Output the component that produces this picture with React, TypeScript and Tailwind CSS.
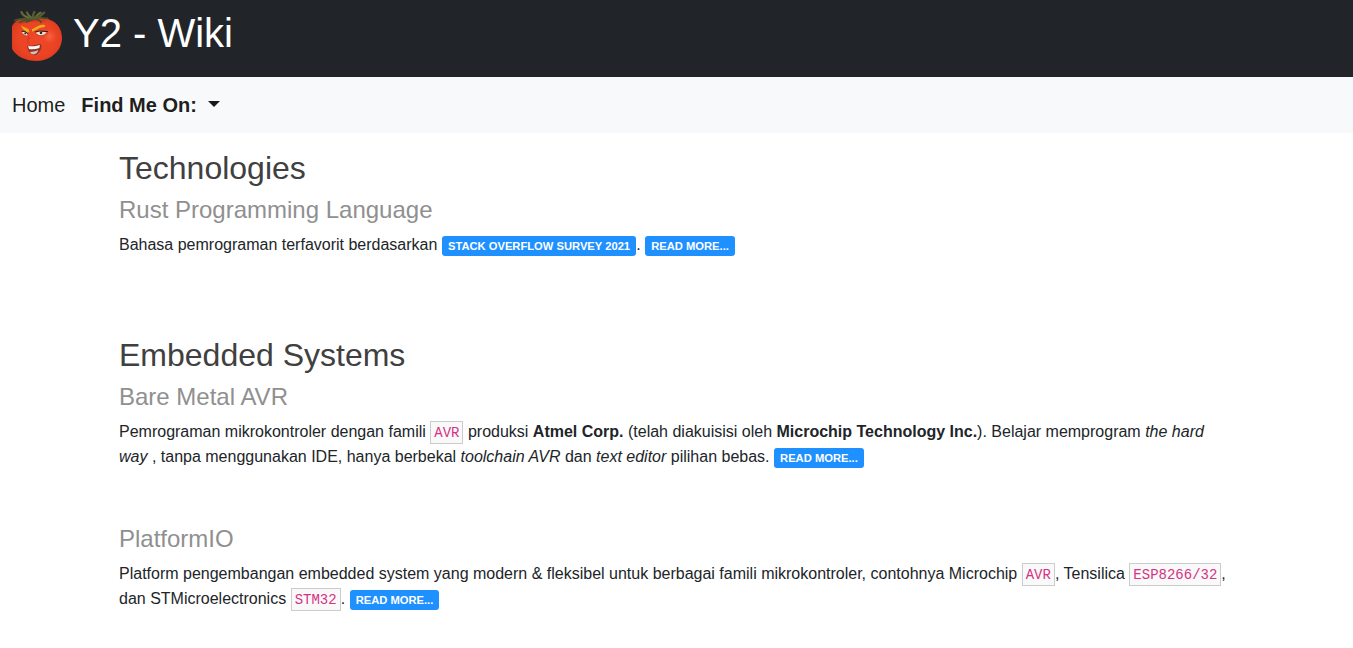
import type { ReactNode } from "react";

function TomatoLogo() {
  return (
    <svg viewBox="0 0 150 150" className="size-[50px] shrink-0" aria-hidden="true">
      <defs>
        <radialGradient id="skin" cx="0.5" cy="0.5" r="0.6">
          <stop offset="0" stopColor="#ee482a" />
          <stop offset="0.65" stopColor="#eb4324" />
          <stop offset="0.9" stopColor="#dc3c20" />
          <stop offset="1" stopColor="#ba3420" />
        </radialGradient>
        <radialGradient id="shine">
          <stop offset="0" stopColor="#ffa381" stopOpacity="0.75" />
          <stop offset="1" stopColor="#ff7648" stopOpacity="0" />
        </radialGradient>
      </defs>
      <path d="M0 45C10 25 29 19 50 21C70 16 96 18 113 26C137 34 150 56 150 81C150 119 116 149 75 150C40 150 12 135 0 113Z" fill="url(#skin)" />
      <ellipse cx="113" cy="76" rx="22" ry="23" fill="url(#shine)" opacity="0.5" />
      <path d="M24 36C48 29 75 28 99 30" fill="none" stroke="#a93017" strokeWidth="5" opacity="0.5" />
      <g fill="none" strokeLinecap="round">
        <path d="M9 28C28 20 42 22 59 25C45 28 34 27 22 34M62 24C54 31 48 30 44 33M65 24C79 24 84 28 87 34M72 22C87 18 96 23 107 22" stroke="#46502c" strokeWidth="5" />
        <path d="M28 2C31 14 41 17 55 23M45 4C48 13 55 19 65 23M65 23C61 13 64 8 67 3M72 23C73 14 78 9 86 5M79 21C85 13 91 12 96 5" stroke="#565b32" strokeWidth="7" />
        <path d="M29 4C32 12 39 16 49 20M46 7L57 19M69 17C74 12 79 10 85 6" stroke="#8a854b" strokeWidth="2" />
      </g>
      <path d="M27 43C34 49 41 50 50 55L52 63L46 65C37 59 31 54 27 43ZM60 54C71 51 76 42 92 41C101 41 103 45 94 49C80 49 75 58 60 62Z" fill="#eaae18" />
      <path d="M30 63L39 61L47 69L43 74C35 73 32 69 30 63ZM71 65L83 61L103 64C101 72 91 75 80 73Z" fill="#f3dfd2" />
      <path d="M29 61L39 61L49 69M69 63L83 60L108 62" fill="none" stroke="#30201c" strokeWidth="3" />
      <path d="M75 71C83 76 94 75 101 68M32 69L43 76" fill="none" stroke="#6c2419" strokeWidth="1.5" />
      <circle cx="40" cy="67" r="3.2" fill="#302520" />
      <ellipse cx="87" cy="66" rx="4" ry="3.5" fill="#302520" />
      <path d="M48 76C53 80 45 84 49 90M45 93L52 98M50 84L54 80M101 72L107 67" fill="none" stroke="#9d2b1a" strokeWidth="2" opacity="0.75" />
      <path d="M46 105C57 106 71 104 85 100C91 110 82 124 72 131C62 133 53 127 50 118Z" fill="#8b352b" stroke="#792c20" strokeWidth="1.5" />
      <path d="M48 105C58 107 72 106 84 102L82 111C71 115 60 116 51 114Z" fill="#fff7ed" />
      <path d="M54 123C61 121 69 123 79 117C77 126 70 131 63 130C58 129 55 126 54 123Z" fill="#d8bdb5" />
    </svg>
  );
}

function Badge({ children }: { children: ReactNode }) {
  return (
    <a href="#" className="inline-block rounded-[3px] bg-[#1e90ff] px-[6.1px] pt-[5px] pb-[4px] align-baseline text-[11.2px] leading-[11px] font-bold whitespace-nowrap text-white uppercase">
      {children}
    </a>
  );
}

function Code({ children }: { children: ReactNode }) {
  return (
    <code className="border border-[#ccc] bg-[#f9f9f9] px-[3px] pt-[3px] pb-[2px] font-['Liberation_Mono',monospace] text-[14px] text-[#d63384]">
      {children}
    </code>
  );
}

function Topic({ title, children }: { title: string; children: ReactNode }) {
  return (
    <article>
      <h4 className="mb-2 text-2xl leading-[28.8px] text-[#909090]">{title}</h4>
      <p>{children}</p>
    </article>
  );
}

export default function App() {
  return (
    <div className="min-h-screen bg-white font-['Liberation_Sans',Arial,sans-serif] text-base leading-6 text-[#212529]">
      <header className="flex h-[77px] items-start bg-[#212529] px-3 text-white">
        <div className="pt-[11px]"><TomatoLogo /></div>
        <h1 className="ml-[11px] pt-[9px] text-[40px] leading-[48px]">Y2 - Wiki</h1>
      </header>
      <nav className="flex h-14 items-center gap-4 bg-[#f8f9fa] px-3 text-xl leading-[30px] text-black/90">
        <a href="#">Home</a>
        <button className="flex items-center font-bold">
          Find Me On:
          <span className="mb-[2px] ml-[11px] border-x-[6px] border-t-[6px] border-x-transparent border-t-black/90" />
        </button>
      </nav>
      <main className="mx-auto w-[1141px] pr-3 pl-[13px] pt-4">
        <section className="h-[187px]">
          <h2 className="mb-[8.6px] text-[32px] leading-[38.4px] text-[#404040]">Technologies</h2>
          <Topic title="Rust Programming Language">
            Bahasa pemrograman terfavorit berdasarkan <Badge>Stack Overflow Survey 2021</Badge>. <Badge>Read more...</Badge>
          </Topic>
        </section>
        <section>
          <h2 className="mb-[8.6px] text-[32px] leading-[38.4px] text-[#404040]">Embedded Systems</h2>
          <div className="h-[142px]">
            <Topic title="Bare Metal AVR">
              Pemrograman mikrokontroler dengan famili <Code>AVR</Code> produksi <b>Atmel Corp.</b> (telah diakuisisi oleh <b>Microchip Technology Inc.</b>). Belajar memprogram <i>the hard way</i> , tanpa menggunakan IDE, hanya berbekal <i>toolchain AVR</i> dan <i>text editor</i> pilihan bebas. <Badge>Read more...</Badge>
            </Topic>
          </div>
          <Topic title="PlatformIO">
            Platform pengembangan embedded system yang modern &amp; fleksibel untuk berbagai famili mikrokontroler, contohnya Microchip <Code>AVR</Code>, Tensilica <Code>ESP8266/32</Code>, dan STMicroelectronics <Code>STM32</Code>. <Badge>Read more...</Badge>
          </Topic>
        </section>
      </main>
    </div>
  );
}
